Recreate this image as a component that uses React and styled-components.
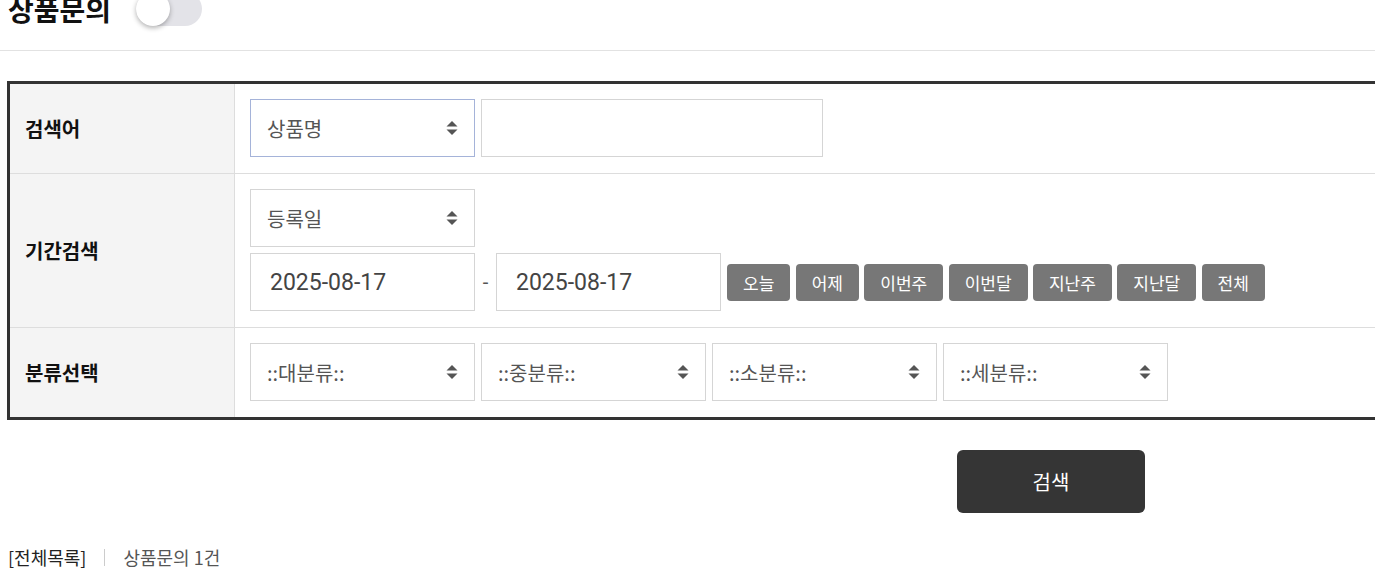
import React from 'react';
import styled, { createGlobalStyle } from 'styled-components';

const GlobalStyle = createGlobalStyle`
    html, body {
        margin: 0;
        padding: 0;
        background: #fff;
        overflow: hidden;
    }
    body {
        font-family: Roboto, "Noto Sans CJK KR", sans-serif;
        color: #333;
    }
`

const Header = styled.div`
    display: flex;
    align-items: center;
    gap: 25px;
    height: 82px;
    margin-top: -32px;
    padding-left: 8px;
    border-bottom: 1px solid #e2e2e2;
`

const Title = styled.h2`
    margin: 0;
    font-family: "Noto Sans CJK KR", sans-serif;
    font-size: 28px;
    font-weight: 700;
    color: #111;
`

const Toggle = styled.div`
    position: relative;
    width: 66px;
    height: 34px;
    border-radius: 17px;
    background: #e3e3e8;
`

const Knob = styled.span`
    position: absolute;
    left: 0;
    top: 0;
    width: 34px;
    height: 34px;
    border-radius: 50%;
    background: #fff;
    box-shadow: 0 2px 5px rgba(0, 0, 0, 0.3);
`

const Page = styled.div`
    width: 2086px;
    padding-left: 7px;
`

const SearchTable = styled.div`
    margin-top: 30px;
    border: 3px solid #333;
    border-right: none;
`

const Row = styled.div`
    display: flex;
    border-top: ${p => (p.$first ? 'none' : '1px solid #ddd')};
`

const Label = styled.div`
    width: 209px;
    flex-shrink: 0;
    display: flex;
    align-items: center;
    padding-left: 15px;
    background: #f4f4f4;
    border-right: 1px solid #ddd;
    font-family: "Noto Sans CJK KR", sans-serif;
    font-size: 20px;
    font-weight: 700;
    color: #111;
`

const Cell = styled.div`
    flex: 1;
    display: flex;
    flex-direction: column;
    gap: 6px;
    padding: 15px 15px 16px;
`

const Line = styled.div`
    display: flex;
    align-items: center;
    gap: 6px;
`

const SelectBox = styled.div`
    box-sizing: border-box;
    width: 225px;
    height: 58px;
    display: flex;
    align-items: center;
    justify-content: space-between;
    padding: 0 16px 0 16px;
    border: 1px solid ${p => (p.$focus ? '#a5b3d9' : '#d5d5d5')};
    background: #fff;
    font-family: "Noto Sans CJK KR", sans-serif;
    font-size: 20px;
    color: #555;
`

const TextInput = styled.div`
    box-sizing: border-box;
    width: ${p => p.$w || 342}px;
    height: 58px;
    display: flex;
    align-items: center;
    padding-left: 19px;
    border: 1px solid #d5d5d5;
    background: #fff;
    font-family: Roboto, sans-serif;
    font-size: 23px;
    color: #444;
`

const Dash = styled.span`
    width: 9px;
    text-align: center;
    font-size: 20px;
    color: #555;
`

const QuickButtons = styled.div`
    display: flex;
    gap: 5.4px;
`

const QuickButton = styled.button`
    height: 37px;
    padding: 0 16px;
    border: none;
    border-radius: 4px;
    background: #777;
    color: #fff;
    font-family: "Noto Sans CJK KR", sans-serif;
    font-size: 17px;
    cursor: pointer;
`

const ButtonRow = styled.div`
    display: flex;
    justify-content: center;
    margin-top: 30px;
    padding-left: 2px;
`

const SearchButton = styled.button`
    width: 188px;
    height: 63px;
    border: none;
    border-radius: 6px;
    background: #353535;
    color: #fff;
    font-family: "Noto Sans CJK KR", sans-serif;
    font-size: 20px;
`

const Summary = styled.div`
    display: flex;
    align-items: center;
    margin-top: 31px;
    padding-left: 1px;
    font-family: "Noto Sans CJK KR", sans-serif;
    font-size: 18px;
`

const AllList = styled.span`
    color: #222;
`

const Divider = styled.span`
    width: 1px;
    height: 17px;
    background: #ccc;
    margin: 0 18px;
`

const Count = styled.span`
    color: #555;
`

const Arrows = () => (
    <svg width="12" height="16" viewBox="0 0 12 16">
        <path d="M6 1 L11.5 6.5 H0.5 Z" fill="#555" />
        <path d="M6 15 L11.5 9.5 H0.5 Z" fill="#555" />
    </svg>
)

const Select = ({ children, focus }) => (
    <SelectBox $focus={focus}>
        <span>{children}</span>
        <Arrows />
    </SelectBox>
)

const quick = ['오늘', '어제', '이번주', '이번달', '지난주', '지난달', '전체'];

export default function App() {
    return (
        <>
            <GlobalStyle />
            <Header>
                <Title>상품문의</Title>
                <Toggle><Knob /></Toggle>
            </Header>
            <Page>
                <SearchTable>
                    <Row $first>
                        <Label>검색어</Label>
                        <Cell>
                            <Line>
                                <Select focus>상품명</Select>
                                <TextInput />
                            </Line>
                        </Cell>
                    </Row>
                    <Row>
                        <Label>기간검색</Label>
                        <Cell>
                            <Line><Select>등록일</Select></Line>
                            <Line>
                                <TextInput $w={225}>2025-08-17</TextInput>
                                <Dash>-</Dash>
                                <TextInput $w={225}>2025-08-17</TextInput>
                                <QuickButtons>
                                    {quick.map(q => <QuickButton key={q}>{q}</QuickButton>)}
                                </QuickButtons>
                            </Line>
                        </Cell>
                    </Row>
                    <Row>
                        <Label>분류선택</Label>
                        <Cell>
                            <Line>
                                <Select>::대분류::</Select>
                                <Select>::중분류::</Select>
                                <Select>::소분류::</Select>
                                <Select>::세분류::</Select>
                            </Line>
                        </Cell>
                    </Row>
                </SearchTable>
                <ButtonRow>
                    <SearchButton>검색</SearchButton>
                </ButtonRow>
                <Summary>
                    <AllList>[전체목록]</AllList>
                    <Divider />
                    <Count>상품문의 1건</Count>
                </Summary>
            </Page>
        </>
    );
}
